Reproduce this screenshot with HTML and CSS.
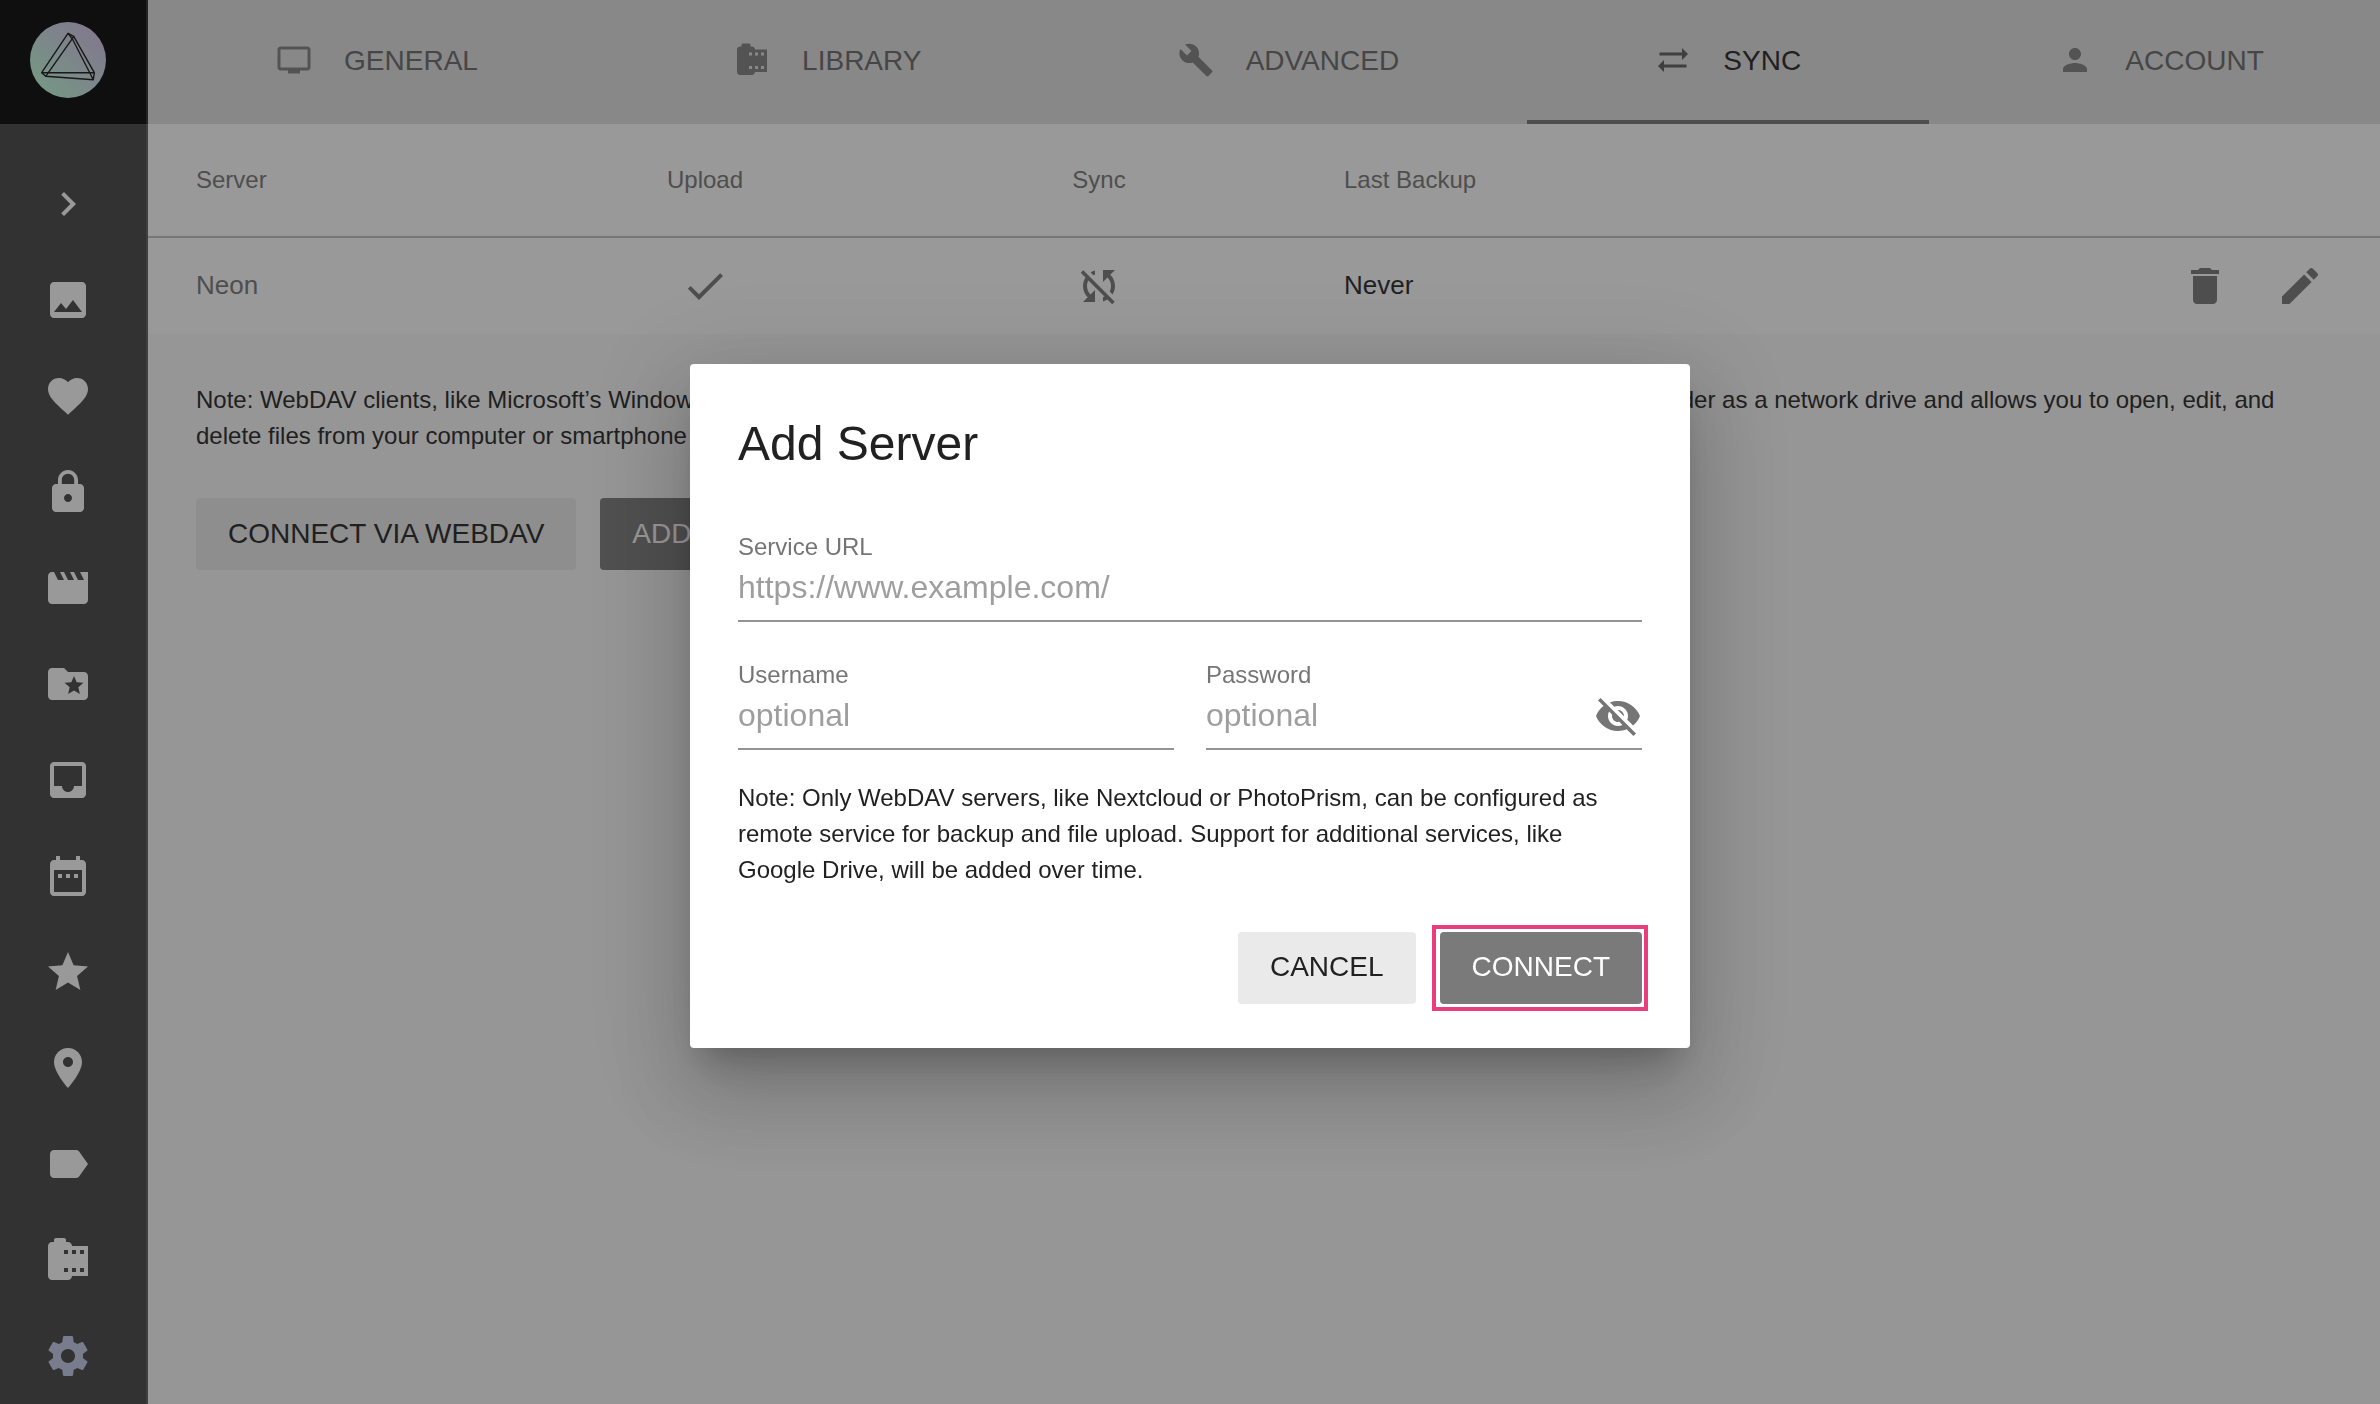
FILE: index.html
```html
<!DOCTYPE html>
<html lang="en">
<head>
<meta charset="utf-8">
<title>Settings</title>
<link rel="stylesheet" href="styles.css">
</head>
<body>
<div class="app">
  <nav class="sidebar">
    <div class="brand">
      <svg class="logo" viewBox="0 0 76 76">
        <defs><linearGradient id="lg" x1="0.15" y1="0.85" x2="0.85" y2="0.15"><stop offset="0" stop-color="#bff8da"/><stop offset="1" stop-color="#d4c6ea"/></linearGradient></defs>
        <circle cx="38" cy="38" r="38" fill="url(#lg)"/>
        <g fill="none" stroke="#111" stroke-width="1.4" stroke-linejoin="round">
          <path d="M38 11.300L11.700 50.700H64.300L43.700 14.300z"/>
          <path d="M42.300 16.700L15.700 54.300L63.300 57.700z"/>
          <path d="M38 11.300L42.300 16.700L43.700 14.300M11.700 50.700L15.700 54.300M64.300 50.700L63.300 57.700"/>
        </g>
      </svg>
    </div>
    <div class="menu">
      <a class="menu-item"><svg class="icon" viewBox="0 0 24 24"><path d="M10 6L8.590 7.410 13.170 12l-4.580 4.590L10 18l6-6z"/></svg></a>
      <a class="menu-item"><svg class="icon" viewBox="0 0 24 24"><path d="M21 19V5c0-1.100-.9-2-2-2H5c-1.100 0-2 .9-2 2v14c0 1.100.9 2 2 2h14c1.100 0 2-.9 2-2zM8.500 13.500l2.500 3.010L14.500 12l4.500 6H5l3.500-4.500z"/></svg></a>
      <a class="menu-item"><svg class="icon" viewBox="0 0 24 24"><path d="M12 21.350l-1.450-1.320C5.400 15.360 2 12.280 2 8.500 2 5.420 4.420 3 7.500 3c1.740 0 3.410.81 4.500 2.090C13.090 3.810 14.760 3 16.500 3 19.580 3 22 5.420 22 8.500c0 3.780-3.400 6.860-8.550 11.540L12 21.350z"/></svg></a>
      <a class="menu-item"><svg class="icon" viewBox="0 0 24 24"><path d="M18 8h-1V6c0-2.760-2.240-5-5-5S7 3.240 7 6v2H6c-1.100 0-2 .9-2 2v10c0 1.100.9 2 2 2h12c1.100 0 2-.9 2-2V10c0-1.100-.9-2-2-2zm-6 9c-1.100 0-2-.9-2-2s.9-2 2-2 2 .9 2 2-.9 2-2 2zm3.100-9H8.900V6c0-1.710 1.390-3.100 3.100-3.100s3.100 1.390 3.100 3.100v2z"/></svg></a>
      <a class="menu-item"><svg class="icon" viewBox="0 0 24 24"><path d="M18 4l2 4h-3l-2-4h-2l2 4h-3l-2-4H8l2 4H7L5 4H4c-1.100 0-1.990.9-1.990 2L2 18c0 1.100.9 2 2 2h16c1.100 0 2-.9 2-2V4h-4z"/></svg></a>
      <a class="menu-item"><svg class="icon" viewBox="0 0 24 24"><path d="M20 6h-8l-2-2H4c-1.100 0-1.990.9-1.990 2L2 18c0 1.100.9 2 2 2h16c1.100 0 2-.9 2-2V8c0-1.100-.9-2-2-2zm-2.060 11L15 15.280 12.060 17l.78-3.330-2.590-2.240 3.410-.29L15 8l1.340 3.140 3.410.29-2.590 2.240.78 3.330z"/></svg></a>
      <a class="menu-item"><svg class="icon" viewBox="0 0 24 24"><path d="M19 3H4.990c-1.110 0-1.980.89-1.980 2L3 19c0 1.100.88 2 1.990 2H19c1.100 0 2-.9 2-2V5c0-1.110-.9-2-2-2zm0 12h-4c0 1.660-1.350 3-3 3s-3-1.340-3-3H4.990V5H19v10z"/></svg></a>
      <a class="menu-item"><svg class="icon" viewBox="0 0 24 24"><path d="M9 11H7v2h2v-2zm4 0h-2v2h2v-2zm4 0h-2v2h2v-2zm2-7h-1V2h-2v2H8V2H6v2H5c-1.110 0-1.990.9-1.990 2L3 20c0 1.100.89 2 2 2h14c1.100 0 2-.9 2-2V6c0-1.100-.9-2-2-2zm0 16H5V9h14v11z"/></svg></a>
      <a class="menu-item"><svg class="icon" viewBox="0 0 24 24"><path d="M12 17.270L18.180 21l-1.640-7.030L22 9.240l-7.190-.61L12 2 9.190 8.630 2 9.240l5.460 4.730L5.820 21z"/></svg></a>
      <a class="menu-item"><svg class="icon" viewBox="0 0 24 24"><path d="M12 2C8.130 2 5 5.130 5 9c0 5.250 7 13 7 13s7-7.750 7-13c0-3.870-3.130-7-7-7zm0 9.500c-1.380 0-2.500-1.120-2.500-2.500s1.120-2.500 2.500-2.500 2.500 1.120 2.500 2.500-1.120 2.500-2.500 2.500z"/></svg></a>
      <a class="menu-item"><svg class="icon" viewBox="0 0 24 24"><path d="M17.630 5.840C17.270 5.330 16.670 5 16 5L5 5.010C3.900 5.010 3 5.900 3 7v10c0 1.100.9 1.990 2 1.990L16 19c.67 0 1.270-.33 1.630-.84L22 12l-4.370-6.160z"/></svg></a>
      <a class="menu-item"><svg class="icon" viewBox="0 0 24 24"><path d="M14 5c0-1.100-.9-2-2-2h-1V2c0-.55-.45-1-1-1H6c-.55 0-1 .45-1 1v1H4c-1.100 0-2 .9-2 2v15c0 1.100.9 2 2 2h8c1.100 0 2-.9 2-2h8V5h-8zm-2 13h-2v-2h2v2zm0-9h-2V7h2v2zm4 9h-2v-2h2v2zm0-9h-2V7h2v2zm4 9h-2v-2h2v2zm0-9h-2V7h2v2z"/></svg></a>
      <a class="menu-item menu-item-active"><svg class="icon" viewBox="0 0 24 24"><path d="M19.430 12.980c.04-.32.07-.64.07-.98s-.03-.66-.07-.98l2.110-1.650c.19-.15.24-.42.12-.64l-2-3.460c-.12-.22-.39-.3-.61-.22l-2.490 1c-.52-.4-1.080-.73-1.690-.98l-.38-2.650C14.460 2.180 14.250 2 14 2h-4c-.25 0-.46.18-.49.42l-.38 2.650c-.61.25-1.170.59-1.690.98l-2.490-1c-.23-.09-.49 0-.61.22l-2 3.460c-.13.22-.07.49.12.64l2.110 1.650c-.04.32-.07.65-.07.98s.03.66.07.98l-2.110 1.650c-.19.15-.24.42-.12.64l2 3.460c.12.22.39.3.61.22l2.490-1c.52.4 1.080.73 1.690.98l.38 2.650c.03.24.24.42.49.42h4c.25 0 .46-.18.49-.42l.38-2.650c.61-.25 1.170-.59 1.690-.98l2.490 1c.23.09.49 0 .61-.22l2-3.460c.12-.22.07-.49-.12-.64l-2.110-1.650zM12 15.500c-1.930 0-3.500-1.570-3.500-3.500s1.570-3.500 3.500-3.500 3.500 1.570 3.500 3.500-1.570 3.500-3.500 3.500z"/></svg></a>
    </div>
  </nav>
  <main class="page">
    <div class="tabs">
      <a class="tab"><svg class="icon" viewBox="0 0 24 24"><path d="M21 3H3c-1.100 0-2 .9-2 2v12c0 1.100.9 2 2 2h5v2h8v-2h5c1.100 0 1.990-.9 1.990-2L23 5c0-1.100-.9-2-2-2zm0 14H3V5h18v12z"/></svg><span>GENERAL</span></a>
      <a class="tab"><svg class="icon" viewBox="0 0 24 24"><path d="M14 5c0-1.100-.9-2-2-2h-1V2c0-.55-.45-1-1-1H6c-.55 0-1 .45-1 1v1H4c-1.100 0-2 .9-2 2v15c0 1.100.9 2 2 2h8c1.100 0 2-.9 2-2h8V5h-8zm-2 13h-2v-2h2v2zm0-9h-2V7h2v2zm4 9h-2v-2h2v2zm0-9h-2V7h2v2zm4 9h-2v-2h2v2zm0-9h-2V7h2v2z"/></svg><span>LIBRARY</span></a>
      <a class="tab"><svg class="icon" viewBox="0 0 24 24"><path d="M22.700 19l-9.100-9.100c.9-2.300.4-5-1.500-6.900-2-2-5-2.400-7.400-1.300L9 6 6 9 1.600 4.700C.4 7.100.9 10.100 2.900 12.100c1.900 1.900 4.600 2.400 6.900 1.500l9.100 9.100c.4.4 1 .4 1.400 0l2.300-2.300c.5-.4.5-1.100.1-1.400z"/></svg><span>ADVANCED</span></a>
      <a class="tab tab-active"><svg class="icon" viewBox="0 0 24 24"><path d="M22 8l-4-4v3H3v2h15v3l4-4zM2 16l4 4v-3h15v-2H6v-3l-4 4z"/></svg><span>SYNC</span></a>
      <a class="tab"><svg class="icon" viewBox="0 0 24 24"><path d="M12 12c2.210 0 4-1.790 4-4s-1.790-4-4-4-4 1.790-4 4 1.790 4 4 4zm0 2c-2.670 0-8 1.340-8 4v2h16v-2c0-2.660-5.330-4-8-4z"/></svg><span>ACCOUNT</span></a>
    </div>
    <div class="table">
      <div class="row row-head">
        <span>Server</span><span class="center">Upload</span><span class="center">Sync</span><span class="backup">Last Backup</span>
      </div>
      <div class="row row-body">
        <span class="cell-text server">Neon</span>
        <span class="center"><svg class="icon" viewBox="0 0 24 24"><path d="M9 16.170L4.830 12l-1.420 1.410L9 19 21 7l-1.410-1.410z"/></svg></span>
        <span class="center"><svg class="icon" viewBox="0 0 24 24"><path d="M10 6.350V4.260c-.8.21-1.550.54-2.230.96l1.460 1.460c.25-.12.5-.24.77-.33zm-7.140-.94l2.360 2.360C4.450 8.990 4 10.440 4 12c0 2.210.91 4.200 2.360 5.640L4 20h6v-6l-2.240 2.240C6.680 15.150 6 13.660 6 12c0-1 .25-1.940.68-2.770l8.080 8.080c-.25.13-.5.25-.77.34v2.090c.8-.21 1.550-.54 2.230-.96l2.360 2.360 1.270-1.270L4.140 4.140 2.860 5.410zM20 4h-6v6l2.240-2.240C17.320 8.850 18 10.340 18 12c0 1-.25 1.940-.68 2.770l1.460 1.460C19.550 15.010 20 13.560 20 12c0-2.210-.91-4.200-2.360-5.640L20 4z"/></svg></span>
        <span class="cell-text backup">Never</span>
        <span class="actions">
          <svg class="icon" viewBox="0 0 24 24"><path d="M6 19c0 1.100.9 2 2 2h8c1.100 0 2-.9 2-2V7H6v12zM19 4h-3.500l-1-1h-5l-1 1H5v2h14V4z"/></svg>
          <svg class="icon" viewBox="0 0 24 24"><path d="M3 17.250V21h3.750L17.810 9.940l-3.750-3.750L3 17.250zM20.710 7.040c.39-.39.39-1.020 0-1.410l-2.340-2.340c-.39-.39-1.020-.39-1.410 0l-1.830 1.830 3.750 3.750 1.830-1.830z"/></svg>
        </span>
      </div>
    </div>
    <p class="note page-note">Note: WebDAV clients, like Microsoft’s Windows Explorer or Apple's Finder, can connect directly to PhotoPrism. This mounts the originals folder as a network drive and allows you to open, edit, and<br>delete files from your computer or smartphone as if they were local.</p>
    <div class="page-buttons"><button class="btn">CONNECT VIA WEBDAV</button><button class="btn btn-primary">ADD SERVER</button></div>
  </main>
</div>
<div class="overlay">
  <form class="dialog">
    <h1 class="title">Add Server</h1>
    <label class="field"><span class="label">Service URL</span><span class="control"><input class="input" placeholder="https://www.example.com/"></span></label>
    <div class="pair">
      <label class="field"><span class="label">Username</span><span class="control"><input class="input" placeholder="optional"></span></label>
      <label class="field"><span class="label">Password</span><span class="control"><input class="input" type="password" placeholder="optional"><svg class="icon" viewBox="0 0 24 24"><path d="M12 7c2.760 0 5 2.240 5 5 0 .65-.13 1.260-.36 1.830l2.920 2.920c1.510-1.260 2.700-2.890 3.430-4.750-1.730-4.390-6-7.500-11-7.500-1.400 0-2.740.25-3.980.7l2.160 2.160C10.740 7.130 11.350 7 12 7zM2 4.270l2.280 2.280.46.46C3.080 8.300 1.780 10.020 1 12c1.730 4.390 6 7.500 11 7.500 1.550 0 3.030-.3 4.380-.84l.42.42L19.730 22 21 20.730 3.270 3 2 4.270zM7.530 9.800l1.550 1.550c-.05.21-.08.43-.08.65 0 1.660 1.340 3 3 3 .22 0 .44-.03.65-.08l1.550 1.550c-.67.33-1.410.53-2.200.53-2.760 0-5-2.240-5-5 0-.79.2-1.530.53-2.200zm4.310-.78l3.150 3.150.02-.16c0-1.660-1.340-3-3-3l-.17.01z"/></svg></span></label>
    </div>
    <p class="note dialog-note">Note: Only WebDAV servers, like Nextcloud or PhotoPrism, can be configured as remote service for backup and file upload. Support for additional services, like Google Drive, will be added over time.</p>
    <div class="dialog-buttons"><button class="btn" type="button">CANCEL</button><button class="btn btn-primary btn-marked" type="button">CONNECT</button></div>
  </form>
</div>
</body>
</html>
```
FILE: styles.css
```css
* { box-sizing: border-box; }

body {
  margin: 0;
  height: 1404px;
  overflow: hidden;
  font-family: "Liberation Sans", Helvetica, Arial, sans-serif;
  color: #212121;
  background: #fafafa;
}

.icon { display: block; width: 48px; height: 48px; flex: none; fill: currentColor; }

.app { display: flex; height: 1404px; }

.sidebar {
  flex: none;
  width: 148px;
  background: #424242;
  border-right: 2px solid #5a5a5a;
}

.brand {
  height: 124px;
  width: 148px;
  padding: 22px 0 0 30px;
  background: #000;
  border-right: 2px solid #262626;
}

.logo { display: block; width: 76px; height: 76px; }

.menu { display: flex; flex-direction: column; padding-top: 32px; }

.menu-item {
  display: flex;
  align-items: center;
  height: 96px;
  padding-left: 44px;
  color: #fff;
}

.menu-item-active { color: #c5cae9; }

.page { flex: 1; min-width: 0; }

.tabs {
  display: flex;
  height: 124px;
  overflow: hidden;
  background: #e0e0e0;
}

.tab {
  display: flex;
  flex: none;
  align-items: center;
  gap: 32px;
  height: 124px;
  padding: 0 128.1px 4px;
  font-size: 28px;
  color: #666;
}

.tab span { padding-top: 2px; }

.tab .icon { width: 36px; height: 36px; opacity: .8; }

.tab-active { color: #212121; border-bottom: 4px solid #757575; padding-bottom: 0; }

.tab-active .icon { opacity: .7; }

.row {
  display: grid;
  grid-template-columns: 310px 398px 390px 1fr auto;
  align-items: center;
  padding: 0 56px 0 48px;
  background: #fff;
}

.row-head {
  grid-template-columns: 310px 398px 390px 1fr;
  height: 114px;
  font-size: 24px;
  color: #757575;
  border-bottom: 2px solid #c0c0c0;
}

.row-body { height: 96px; font-size: 26px; }

.center { display: flex; justify-content: center; color: #757575; }

.cell-text { padding-bottom: 2px; }

.server { color: #757575; }

.backup { padding-left: 50px; }

.actions { display: flex; gap: 47px; color: #757575; }

.note { margin: 0; font-size: 24px; line-height: 36px; }

.page-note { padding: 48px 0 0 48px; white-space: nowrap; }

.page-buttons { display: flex; gap: 24px; padding: 44px 48px; }

.btn {
  height: 72px;
  padding: 0 32px 2px;
  border: 0;
  border-radius: 4px;
  font: 28px "Liberation Sans", Helvetica, Arial, sans-serif;
  color: #212121;
  background: #eaeaea;
}

.page-buttons .btn { padding-bottom: 0; }

.btn-primary, .page-buttons .btn-primary { color: #fff; background: #7a7a7a; }

.overlay {
  position: fixed;
  inset: 0;
  display: flex;
  align-items: flex-start;
  justify-content: center;
  padding-top: 364px;
  background: rgba(33, 33, 33, .46);
}

.dialog {
  width: 1000px;
  height: 684px;
  padding: 48px;
  border-radius: 4px;
  background: #fff;
  box-shadow: 0 22px 30px -14px rgba(0, 0, 0, .2), 0 48px 76px 6px rgba(0, 0, 0, .14), 0 18px 92px 16px rgba(0, 0, 0, .12);
}

.title { margin: 0; font-size: 48px; font-weight: 400; line-height: 64px; }

.dialog .field { display: flex; flex-direction: column; }

.title + .field { margin-top: 58px; }

.label { font-size: 24px; line-height: 26px; color: #757575; }

.control {
  display: flex;
  align-items: flex-start;
  height: 62px;
  border-bottom: 2px solid #949494;
}

.control .icon { color: #757575; margin-top: 4px; }

.input {
  flex: 1;
  min-width: 0;
  height: 36px;
  margin-top: 9px;
  padding: 0;
  border: 0;
  outline: 0;
  font: 32px "Liberation Sans", Helvetica, Arial, sans-serif;
  background: none;
}

.input::placeholder { color: #9e9e9e; opacity: 1; }

.pair {
  display: grid;
  grid-template-columns: repeat(2, minmax(0, 1fr));
  gap: 32px;
  margin-top: 40px;
}

.dialog-note { margin-top: 30px; }

.dialog-buttons { display: flex; justify-content: flex-end; gap: 24px; margin-top: 44px; }

.btn-marked { position: relative; }

.btn-marked::after {
  content: "";
  position: absolute;
  inset: -7px -6px -7px -8px;
  border: 4px solid #e83e7c;
}
```
